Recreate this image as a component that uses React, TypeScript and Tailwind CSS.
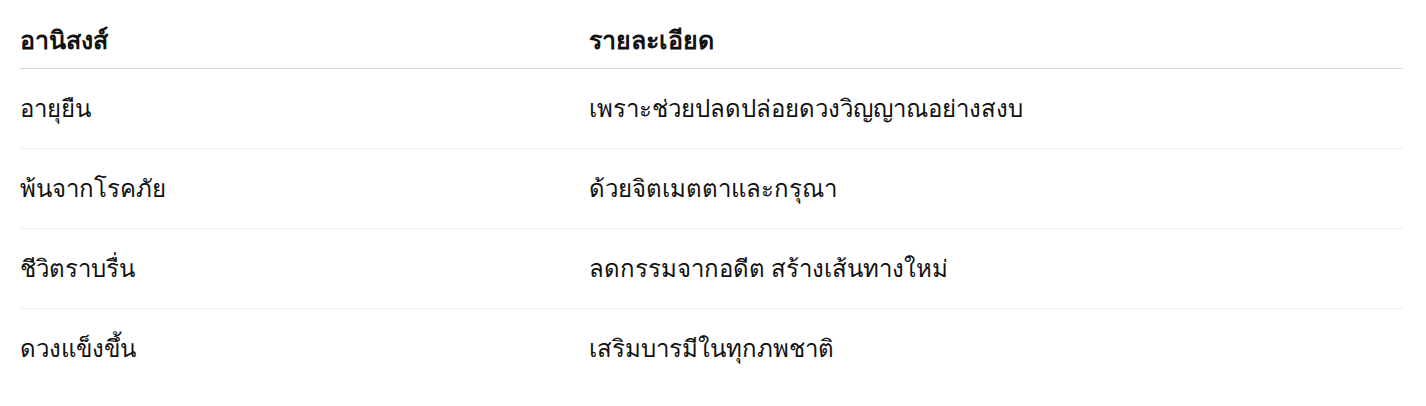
const rows = [
  { benefit: "อายุยืน", detail: "เพราะช่วยปลดปล่อยดวงวิญญาณอย่างสงบ" },
  { benefit: "พ้นจากโรคภัย", detail: "ด้วยจิตเมตตาและกรุณา" },
  { benefit: "ชีวิตราบรื่น", detail: "ลดกรรมจากอดีต สร้างเส้นทางใหม่" },
  { benefit: "ดวงแข็งขึ้น", detail: "เสริมบารมีในทุกภพชาติ" },
]

export default function App() {
  return (
    <div className="bg-white min-h-screen pt-3 pl-5" style={{ fontFamily: "'Noto Sans', 'Liberation Sans', sans-serif" }}>
      <table className="w-[1383px] border-collapse text-left text-[24px] text-[#111111]">
        <thead>
          <tr className="border-b border-[#d9d9d9]">
            <th className="w-[569px] h-[56px] p-0 text-[25px] font-bold">อานิสงส์</th>
            <th className="h-[56px] p-0 text-[25px] font-bold">รายละเอียด</th>
          </tr>
        </thead>
        <tbody>
          {rows.map((row, i) => (
            <tr key={row.benefit} className={i < rows.length - 1 ? "border-b border-[#f0f0f0]" : ""}>
              <td className="h-[80px] p-0">{row.benefit}</td>
              <td className="h-[80px] p-0">{row.detail}</td>
            </tr>
          ))}
        </tbody>
      </table>
    </div>
  )
}
